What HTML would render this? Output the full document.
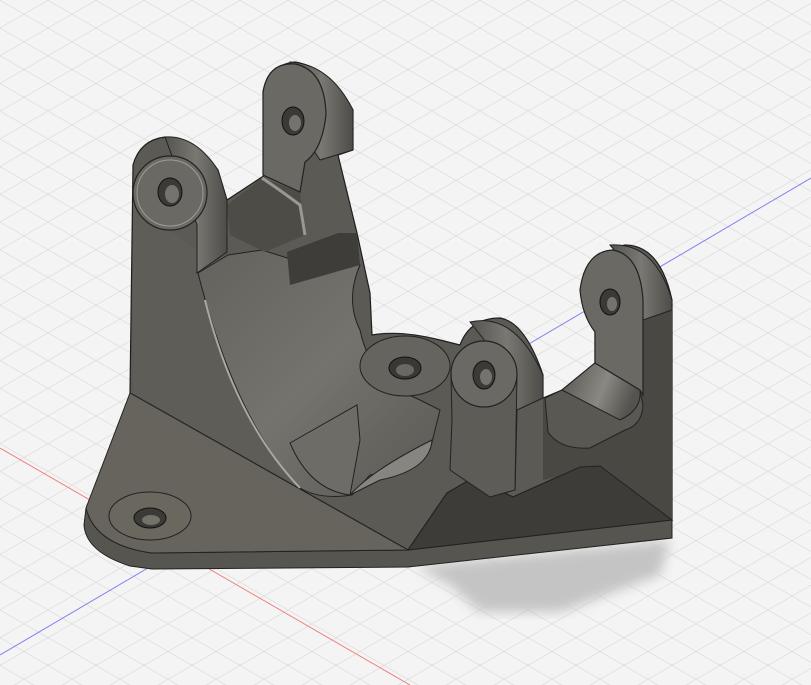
<!DOCTYPE html>
<html><head><style>
html,body{margin:0;padding:0;background:#f4f4f4;overflow:hidden}
svg{display:block}
</style></head><body>
<svg width="811" height="685" viewBox="0 0 811 685" xmlns="http://www.w3.org/2000/svg">
<defs>
<pattern id="g1" width="40" height="24" patternUnits="userSpaceOnUse" patternTransform="rotate(30)">
<line x1="0" y1="0" x2="40" y2="0" stroke="#d2d2d2" stroke-width="1"/>
</pattern>
<pattern id="g2" width="40" height="24" patternUnits="userSpaceOnUse" patternTransform="rotate(-30)">
<line x1="0" y1="0" x2="40" y2="0" stroke="#d2d2d2" stroke-width="1"/>
</pattern>
<filter id="bl"><feGaussianBlur stdDeviation="6"/></filter>
<linearGradient id="cr" x1="0" y1="0" x2="1" y2="1">
<stop offset="0" stop-color="#64625c"/><stop offset="0.5" stop-color="#75736d"/><stop offset="1" stop-color="#5a5853"/>
</linearGradient>
<linearGradient id="lug" x1="0" y1="0" x2="1" y2="0">
<stop offset="0" stop-color="#55534e"/><stop offset="0.5" stop-color="#7a7872"/><stop offset="1" stop-color="#4e4c48"/>
</linearGradient>
<linearGradient id="u" x1="0" y1="0" x2="1" y2="0.3">
<stop offset="0" stop-color="#55534e"/><stop offset="0.6" stop-color="#8a8882"/><stop offset="1" stop-color="#55534e"/>
</linearGradient>
</defs>
<rect width="811" height="685" fill="#f4f4f4"/>
<rect width="811" height="685" fill="url(#g1)"/>
<rect width="811" height="685" fill="url(#g2)"/>
<line x1="0" y1="448" x2="410" y2="685" stroke="#f08080" stroke-width="1"/>
<line x1="0" y1="655" x2="811" y2="178" stroke="#8080f0" stroke-width="1"/>
<!-- shadow -->
<polygon points="415,566 670,540 660,575 560,612 480,612 450,585" fill="#c4c4c4" filter="url(#bl)"/>
<!-- plate front edge -->
<path d="M86,508 L84,525 Q86,552 130,566 L152,569 L408,567 L672,538 L672,520 L408,550 L152,553 Q95,545 86,508 Z" fill="#57554f" stroke="#222" stroke-width="1"/>
<!-- main body silhouette -->
<path d="M133,165 Q140,140 165,137 Q195,140 218,170 L227,200 L265,175 L263,92 Q268,65 295,62 Q330,68 353,110 L353,150 L338,155 L357,233 L370,293 L372,335 Q400,330 440,340 L460,345 Q470,318 500,318 Q525,322 543,375 L543,398 L562,390 L595,363 L595,290 Q600,250 625,245 Q660,245 672,300 L672,520 L600,466 L580,467 L513,497 L473,478 L447,493 L408,550 L130,393 Z" fill="#5c5a55" stroke="#1e1e1e" stroke-width="1.2"/>
<!-- left plate top -->
<path d="M130,393 L408,550 L152,553 Q95,545 86,508 Z" fill="#67645d" stroke="#222" stroke-width="1"/>
<!-- right body face -->
<path d="M543,398 L543,480 L600,466 L672,520 L672,300 L643,320 L643,395 Z" fill="#4a4843"/>
<!-- right plate dark -->
<path d="M408,550 L447,493 L473,478 L513,497 L580,467 L600,466 L672,520 Z" fill="#3e3c38" stroke="#222" stroke-width="1"/>
<!-- U cradle right -->
<path d="M545,398 L562,390 L595,363 L640,390 L643,405 Q642,425 625,430 L590,448 Q560,450 548,432 Z" fill="#5a5853" stroke="#222" stroke-width="1"/>
<path d="M562,390 L595,363 L640,390 Q642,410 620,420 Z" fill="url(#u)" stroke="#222" stroke-width="1"/>
<!-- left tower face -->
<path d="M133,165 L133,393 L300,488 Q240,420 205,300 L198,273 L197,250 Q170,232 133,200 Z" fill="#5f5d58"/>
<!-- cradle -->
<path d="M198,273 L228,255 L262,250 L300,262 L360,265 Q345,300 360,330 Q370,380 420,400 L440,410 L430,450 Q400,470 370,475 L352,495 Q320,500 300,488 Q235,420 198,273 Z" fill="url(#cr)" stroke="#222" stroke-width="1"/>
<path d="M205,300 Q235,420 300,488" fill="none" stroke="#aaa8a2" stroke-width="2"/>
<path d="M290,443 L357,405 L360,440 L350,495 Q310,490 290,443 Z" fill="#6e6c66" stroke="#222" stroke-width="1"/>
<path d="M350,495 Q372,470 432,440 Q430,470 380,480 Z" fill="#87857f" stroke="#222" stroke-width="1"/>
<!-- dark band upper -->
<path d="M287,252 L338,233 L357,233 L360,265 L290,285 Z" fill="#3f3d39"/>
<path d="M227,205 L262,178 L300,192 L305,235 L265,252 L230,235 Z" fill="#4e4c47"/>
<path d="M262,178 Q280,190 300,205 L305,235" fill="none" stroke="#9a9892" stroke-width="3"/>
<!-- center boss -->
<ellipse cx="405" cy="366" rx="45" ry="30" fill="#66645e" stroke="#222" stroke-width="1"/>
<ellipse cx="405" cy="368" rx="16" ry="11" fill="#3a3835" stroke="#111" stroke-width="1"/>
<ellipse cx="405" cy="370" rx="9" ry="6" fill="#6a6862"/>
<!-- left lug -->
<path d="M165,137 Q195,135 218,170 L227,200 L227,252 L197,273 L197,225 Z" fill="url(#lug)" stroke="#222" stroke-width="1"/>
<circle cx="170" cy="193" r="37" fill="#6b6963" stroke="#222" stroke-width="1.2"/>
<circle cx="170" cy="193" r="33" fill="none" stroke="#9e9c96" stroke-width="1"/>
<ellipse cx="170" cy="192" rx="12" ry="14" fill="#3c3a36" stroke="#111"/>
<ellipse cx="172" cy="194" rx="7" ry="9" fill="#75736d"/>
<!-- back lug -->
<path d="M290,62 Q330,64 353,110 L353,150 L320,160 L300,130 Z" fill="url(#lug)" stroke="#222" stroke-width="1"/>
<path d="M263,92 Q268,62 295,64 Q325,70 326,115 Q322,150 305,162 L300,192 L263,175 Z" fill="#6b6963" stroke="#222" stroke-width="1.2"/>
<ellipse cx="293" cy="121" rx="11" ry="14" fill="#3c3a36" stroke="#111"/>
<ellipse cx="295" cy="123" rx="6" ry="8" fill="#75736d"/>
<!-- front right lug -->
<path d="M470,322 Q515,312 543,375 L543,398 L517,410 L515,490 L490,495 L500,360 Z" fill="url(#lug)" stroke="#222" stroke-width="1"/>
<path d="M451,374 L452,420 L450,470 L490,497 L515,490 L517,374" fill="#5e5c57" stroke="#222" stroke-width="1"/>
<circle cx="484" cy="374" r="33" fill="#6b6963" stroke="#222" stroke-width="1.2"/>
<ellipse cx="484" cy="375" rx="11" ry="14" fill="#3c3a36" stroke="#111"/>
<ellipse cx="486" cy="377" rx="6" ry="8" fill="#75736d"/>
<!-- far right lug -->
<path d="M610,245 Q655,242 672,300 L672,310 L643,320 L635,275 Z" fill="url(#lug)" stroke="#222" stroke-width="1"/>
<path d="M580,290 Q585,252 612,250 Q640,254 643,300 L643,395 L640,390 L595,363 L595,332 Q582,315 580,290 Z" fill="#6b6963" stroke="#222" stroke-width="1.2"/>
<ellipse cx="610" cy="302" rx="10" ry="13" fill="#3c3a36" stroke="#111"/>
<ellipse cx="612" cy="304" rx="5" ry="7" fill="#75736d"/>
<!-- plate hole -->
<ellipse cx="150" cy="516" rx="41" ry="24" fill="#6a675f" stroke="#222" stroke-width="1"/>
<ellipse cx="150" cy="518" rx="16" ry="10" fill="#3c3a36" stroke="#111"/>
<ellipse cx="151" cy="520" rx="9" ry="5" fill="#74716a"/>
</svg>
</body></html>
